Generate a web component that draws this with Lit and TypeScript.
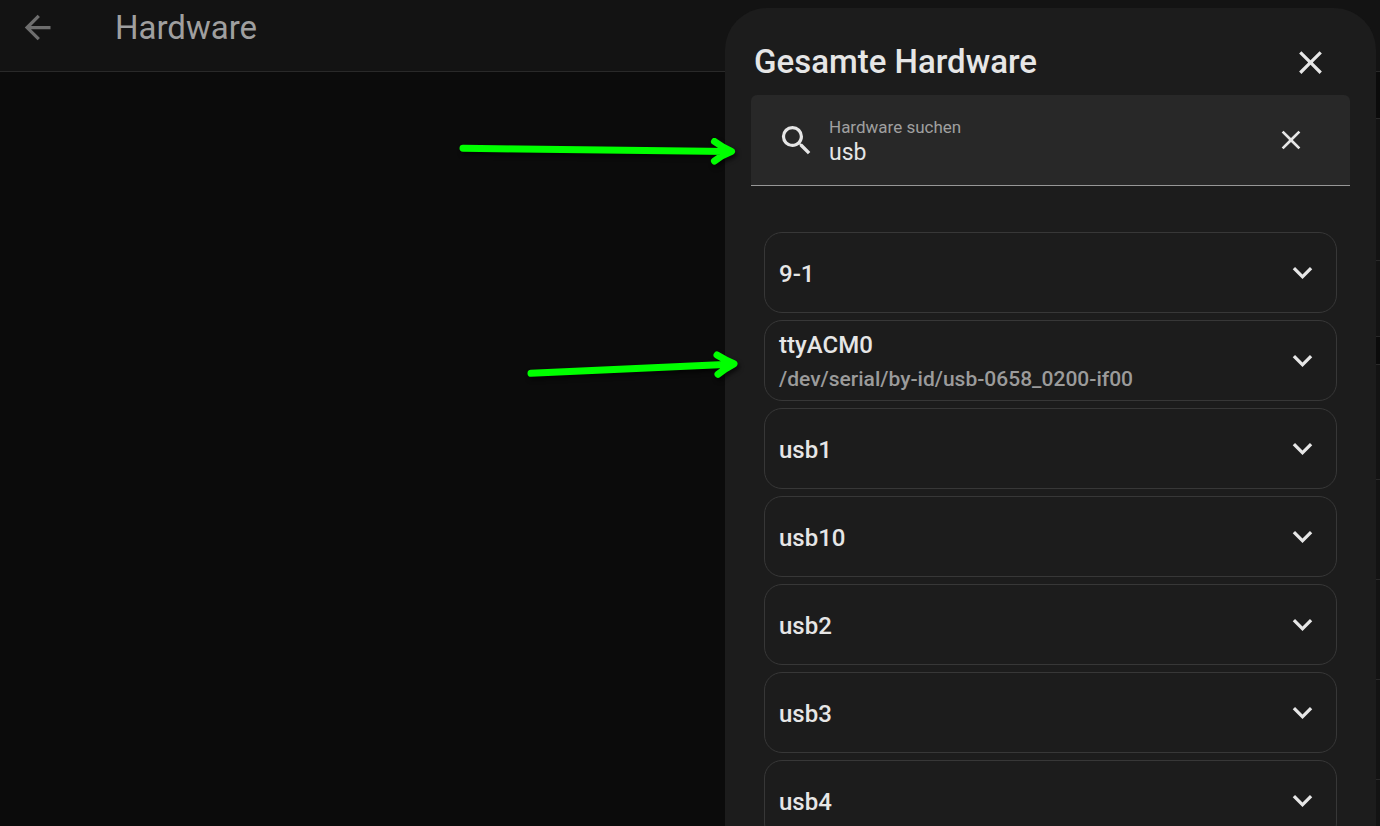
import { LitElement, html, css, svg } from "lit";
import { customElement, property, state } from "lit/decorators.js";

const ICONS: Record<string, string> = {
  back: "M20,11V13H8L13.5,18.5L12.08,19.92L4.16,12L12.08,4.08L13.5,5.5L8,11H20Z",
  close: "M19,6.41L17.59,5L12,10.59L6.41,5L5,6.41L10.59,12L5,17.59L6.41,19L12,13.41L17.59,19L19,17.59L13.41,12L19,6.41Z",
  search:
    "M9.5,3A6.5,6.5 0 0,1 16,9.5C16,11.11 15.41,12.59 14.44,13.73L14.71,14H15.5L20.5,19L19,20.5L14,15.5V14.71L13.73,14.44C12.59,15.41 11.11,16 9.5,16A6.5,6.5 0 0,1 3,9.5A6.5,6.5 0 0,1 9.5,3M9.5,5C7,5 5,7 5,9.5C5,12 7,14 9.5,14C12,14 14,12 14,9.5C14,7 12,5 9.5,5Z",
  chevron: "M7.41,8.58L12,13.17L16.59,8.58L18,10L12,16L6,10L7.41,8.58Z",
};

interface Device {
  name: string;
  path?: string;
}

const DEVICES: Device[] = [
  { name: "9-1" },
  { name: "ttyACM0", path: "/dev/serial/by-id/usb-0658_0200-if00" },
  { name: "usb1" },
  { name: "usb10" },
  { name: "usb2" },
  { name: "usb3" },
  { name: "usb4" },
];

@customElement("hw-icon")
export class HwIcon extends LitElement {
  @property() name = "close";

  static styles = css`
    :host {
      display: block;
      width: 39px;
      height: 39px;
    }
    svg {
      display: block;
      width: 100%;
      height: 100%;
      fill: currentColor;
    }
  `;

  render() {
    return html`<svg viewBox="0 0 24 24" aria-hidden="true">
      ${svg`<path d=${ICONS[this.name]}></path>`}
    </svg>`;
  }
}

@customElement("hw-device")
export class HwDevice extends LitElement {
  @property({ attribute: false }) device: Device = { name: "" };

  static styles = css`
    :host {
      display: block;
    }
    .panel {
      display: flex;
      align-items: center;
      justify-content: space-between;
      box-sizing: border-box;
      width: 100%;
      min-height: 81px;
      padding: 0 14px 0 14px;
      border: 1px solid #373737;
      border-radius: 18px;
      background: none;
      color: #e6e6e6;
      font: 500 24px/34px Roboto, sans-serif;
      text-align: left;
      cursor: pointer;
    }
    .text {
      display: flex;
      flex-direction: column;
      min-width: 0;
      padding-top: 2px;
    }
    .path {
      color: #9b9b9b;
      font-size: 21px;
    }
  `;

  render() {
    return html`<button class="panel" type="button" aria-expanded="false">
      <span class="text">
        <span>${this.device.name}</span>
        ${this.device.path ? html`<span class="path">${this.device.path}</span>` : ""}
      </span>
      <hw-icon name="chevron"></hw-icon>
    </button>`;
  }
}

@customElement("app-root")
export class AppRoot extends LitElement {
  @state() private query = "usb";

  static styles = css`
    :host {
      display: block;
      position: relative;
      height: 100vh;
      overflow: hidden;
      background: #0b0b0b;
      color: #e6e6e6;
      font-family: Roboto, sans-serif;
    }
    .bar {
      display: flex;
      align-items: center;
      gap: 58px;
      box-sizing: border-box;
      height: 72px;
      padding: 0 18px 17px;
      border-bottom: 1px solid #292929;
      background: #131313;
    }
    .bar h1 {
      margin: 0;
      padding-top: 2px;
      color: #9f9f9f;
      font-size: 33px;
      font-weight: 400;
      line-height: 40px;
    }
    button {
      padding: 0;
      border: 0;
      background: none;
      color: inherit;
      cursor: pointer;
    }
    .back {
      color: #6e6e6e;
    }
    .cards {
      display: flex;
      flex-direction: column;
      gap: 27px;
      padding: 46px 0 0 60%;
    }
    .card {
      border: 1px solid #292929;
      border-right: 0;
      background: #131313;
    }
    .row {
      box-sizing: border-box;
      height: 100px;
      border-bottom: 1px solid #292929;
    }
    .row.tall {
      height: 142px;
    }
    .row.short {
      height: 75px;
      border: 0;
    }
    .row.first {
      height: 115px;
    }
    .overlay {
      position: absolute;
      inset: 8px 4px 0 0;
      display: grid;
      grid-template-columns: 725fr 651fr;
    }
    .dialog {
      grid-column: 2;
      box-sizing: border-box;
      min-width: 0;
      padding: 33px 26px 0;
      overflow: hidden;
      border-radius: 42px 42px 0 0;
      background: #1c1c1c;
    }
    .head {
      display: flex;
      align-items: center;
      justify-content: space-between;
      padding: 0 20px 12px 3px;
    }
    .head h2 {
      margin: 0;
      font-size: 33px;
      font-weight: 500;
      line-height: 42px;
    }
    .field {
      display: flex;
      align-items: center;
      gap: 13px;
      box-sizing: border-box;
      height: 91px;
      padding: 0 43px 0 26px;
      border-bottom: 1px solid #979797;
      border-radius: 6px 6px 0 0;
      background: #282828;
    }
    .entry {
      display: flex;
      flex: 1;
      flex-direction: column;
      min-width: 0;
      padding-top: 2px;
    }
    .entry label {
      color: #a0a0a0;
      font-size: 17px;
      line-height: 24px;
    }
    .entry input {
      width: 100%;
      height: 28px;
      padding: 0;
      border: 0;
      outline: 0;
      background: none;
      color: #e6e6e6;
      font: 400 23px/28px Roboto, sans-serif;
    }
    .clear hw-icon {
      width: 32px;
      height: 32px;
    }
    .list {
      display: flex;
      flex-direction: column;
      gap: 7px;
      margin: 0;
      padding: 46px 13px 0;
      list-style: none;
    }
    .arrows {
      position: absolute;
      inset: 0;
      width: 100%;
      height: 100%;
      fill: none;
      stroke: #00ff00;
      stroke-width: 7;
      stroke-linecap: round;
      stroke-linejoin: round;
      filter: drop-shadow(2px 3px 2px #000000a0);
      pointer-events: none;
    }
    .arrows .head-fill {
      fill: #00ff00;
    }
  `;

  private onInput(e: Event) {
    this.query = (e.target as HTMLInputElement).value;
  }

  render() {
    return html`
      <header class="bar">
        <button class="back" type="button" aria-label="Zurück"><hw-icon name="back"></hw-icon></button>
        <h1>Hardware</h1>
      </header>
      <main class="cards">
        <div class="card">
          <div class="row tall"></div>
          <div class="row short"></div>
        </div>
        <div class="card">
          <div class="row first"></div>
          <div class="row"></div>
          <div class="row"></div>
          <div class="row"></div>
          <div class="row"></div>
        </div>
      </main>
      <div class="overlay">
        <section class="dialog" role="dialog" aria-labelledby="title">
          <div class="head">
            <h2 id="title">Gesamte Hardware</h2>
            <button type="button" aria-label="Schließen"><hw-icon name="close"></hw-icon></button>
          </div>
          <div class="field">
            <hw-icon name="search"></hw-icon>
            <div class="entry">
              <label for="search">Hardware suchen</label>
              <input id="search" type="text" .value=${this.query} @input=${this.onInput} />
            </div>
            <button class="clear" type="button" aria-label="Löschen" @click=${() => (this.query = "")}>
              <hw-icon name="close"></hw-icon>
            </button>
          </div>
          <ul class="list">
            ${DEVICES.filter((d) => d.name === "9-1" || (d.name + (d.path ?? "")).includes(this.query)).map(
              (d) => html`<li><hw-device .device=${d}></hw-device></li>`
            )}
          </ul>
        </section>
      </div>
      <svg class="arrows" aria-hidden="true">
        <path d="M463 148.3 L728 151.4 M714.5 141.5 Q722 147 731.5 151.5 Q722 155 714.5 161"></path>
        <path class="head-fill" stroke="none" d="M720 146 L732 151.5 L720 157Z"></path>
        <path d="M531 373.3 L730 364.2 M717 355 Q725 360 734 363.8 Q725 368.5 718 374.2"></path>
        <path class="head-fill" stroke="none" d="M722 358 L734 363.8 L722 370Z"></path>
      </svg>
    `;
  }
}
